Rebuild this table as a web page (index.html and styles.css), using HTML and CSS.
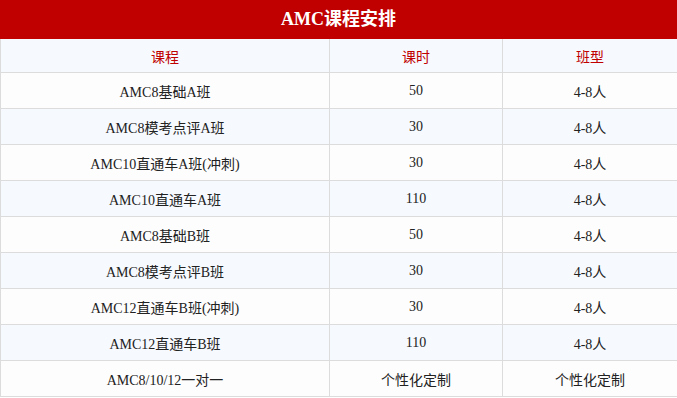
FILE: index.html
```html
<!DOCTYPE html>
<html>
	<head>
		<meta charset="utf-8" />
		<title>AMC课程安排</title>
		<link rel="stylesheet" href="styles.css">
	</head>
	<body>
		<div class="wrap">
			<div class="title">AMC课程安排</div>
			<table class="course">
				<colgroup>
					<col class="c1">
					<col class="c2">
					<col class="c3">
				</colgroup>
				<thead>
					<tr><th>课程</th><th>课时</th><th>班型</th></tr>
				</thead>
				<tbody>
					<tr><td>AMC8基础A班</td><td>50</td><td>4-8人</td></tr>
					<tr><td>AMC8模考点评A班</td><td>30</td><td>4-8人</td></tr>
					<tr><td>AMC10直通车A班(冲刺)</td><td>30</td><td>4-8人</td></tr>
					<tr><td>AMC10直通车A班</td><td>110</td><td>4-8人</td></tr>
					<tr><td>AMC8基础B班</td><td>50</td><td>4-8人</td></tr>
					<tr><td>AMC8模考点评B班</td><td>30</td><td>4-8人</td></tr>
					<tr><td>AMC12直通车B班(冲刺)</td><td>30</td><td>4-8人</td></tr>
					<tr><td>AMC12直通车B班</td><td>110</td><td>4-8人</td></tr>
					<tr><td>AMC8/10/12一对一</td><td>个性化定制</td><td>个性化定制</td></tr>
				</tbody>
			</table>
		</div>
	</body>
</html>
```

FILE: styles.css
```css
html,body
{
	margin: 0;
	padding: 0;
	background-color: #fff;
}

body
{
	font-family: "Liberation Serif", "Noto Sans CJK SC", serif;
	font-size: 14px;
	color: #222;
}

.wrap
{
	width: 677px;
}

.title
{
	background-color: #c00000;
	color: #fff;
	font-size: 18px;
	font-weight: bold;
	height: 39px;
	line-height: 39px;
	text-align: center;
}

.course
{
	width: 677px;
	border-collapse: collapse;
	table-layout: fixed;
}

.c1 { width: 329px; }
.c2 { width: 173px; }
.c3 { width: 175px; }

.course th,
.course td
{
	border: 1px solid #dcdcdc;
	text-align: center;
	padding: 0;
	font-weight: normal;
}

.course th
{
	border-top: none;
	background-color: #f6f9fe;
	color: #c00000;
	height: 33px;
}

.course td
{
	height: 35px;
}

.course tbody tr:nth-child(odd) td
{
	background-color: #fdfdfd;
}

.course tbody tr:nth-child(even) td
{
	background-color: #f6f9fe;
}
```
